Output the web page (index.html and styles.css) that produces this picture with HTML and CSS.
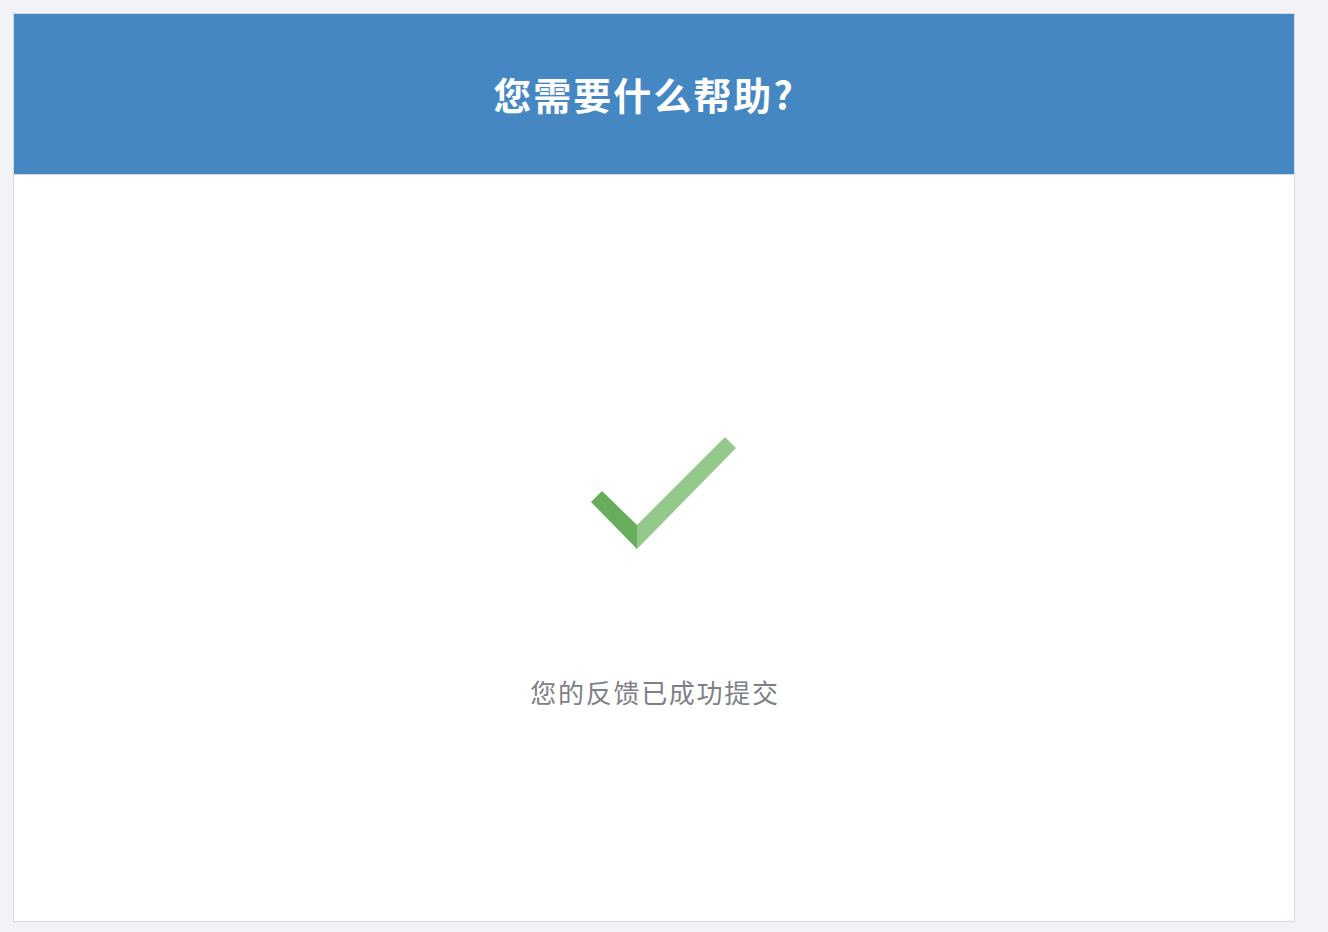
FILE: index.html
```html
<!DOCTYPE html>
<html lang="zh-CN">
<head>
<meta charset="utf-8">
<title>您需要什么帮助?</title>
<link rel="stylesheet" href="styles.css">
</head>
<body>
<div class="card">
  <header class="card-header">
    <h1 class="title">您需要什么帮助?</h1>
  </header>
  <main class="card-body">
    <svg class="check" width="146" height="112" viewBox="0 0 146 112" aria-hidden="true">
      <polygon points="0,65 11,54 46,88 46,112" fill="#68ad5c"/>
      <polygon points="46,88 134,0 145,11 46,112" fill="#95c98b"/>
    </svg>
    <p class="message">您的反馈已成功提交</p>
  </main>
</div>
</body>
</html>
```
FILE: styles.css
```css
html, body {
  margin: 0;
  padding: 0;
}
body {
  background: #f2f3f7;
  padding: 13px 33px 10px 13px;
  font-family: "Noto Sans CJK SC", "Noto Sans", sans-serif;
}
.card {
  box-sizing: border-box;
  width: 1282px;
  height: 909px;
  background: #ffffff;
  border: 1px solid #d9dadd;
  display: flex;
  flex-direction: column;
}
.card-header {
  height: 160px;
  flex: 0 0 auto;
  background: #4487c2;
  border-bottom: 1px solid #d4d6da;
  display: flex;
  align-items: center;
  justify-content: center;
  padding-right: 20px;
}
.title {
  margin: 0;
  color: #ffffff;
  font-size: 38px;
  font-weight: 700;
  letter-spacing: 2px;
  line-height: 1;
}
.card-body {
  flex: 1 1 auto;
  display: flex;
  flex-direction: column;
  align-items: center;
  padding-top: 262px;
}
.check {
  display: block;
  margin-left: 20px;
}
.message {
  margin: 125px 0 0;
  padding-left: 2px;
  color: #7d8086;
  font-size: 26px;
  line-height: 36px;
  letter-spacing: 1.7px;
  font-weight: 400;
}
```
